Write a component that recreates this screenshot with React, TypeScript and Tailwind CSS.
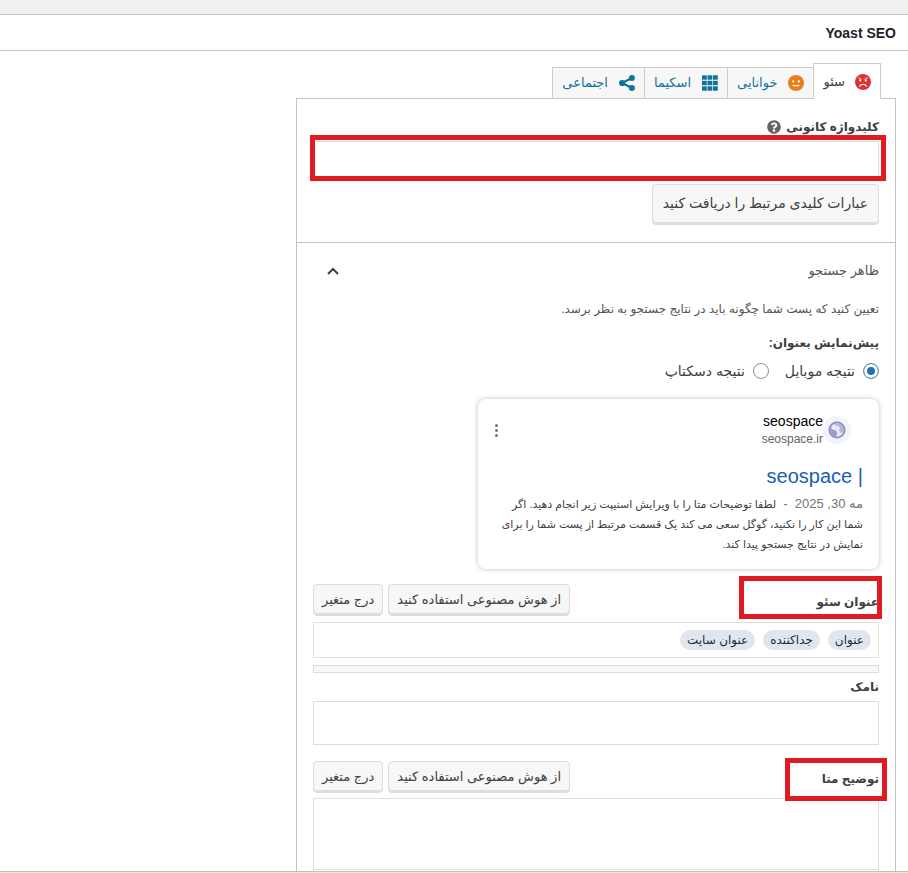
import { useState } from 'react'
import type { ReactNode } from 'react'

const FIELD = 'block w-full border border-[#ddd] bg-white outline-none'
const BUTTON =
  'rounded border border-[#dcdcdc] bg-[#f7f7f7] text-[#404040] shadow-[inset_0_-2px_0_rgba(0,0,0,0.1)] whitespace-nowrap'

function FaceIcon({ color, mood }: { color: string; mood: 'sad' | 'neutral' }) {
  return (
    <svg viewBox="0 0 16 16" className="h-4 w-4 shrink-0" aria-hidden="true">
      <circle cx="8" cy="8" r="8" fill={color} />
      <circle cx="5.2" cy="6.4" r="1.1" fill="#fff" />
      <circle cx="10.8" cy="6.4" r="1.1" fill="#fff" />
      {mood === 'sad' ? (
        <>
          <path d="M4.6 12.2c1.400-2.600 5.400-2.600 6.800 0" fill="none" stroke="#fff" strokeWidth="1.2" strokeLinecap="round" />
          <path d="M3.600 3.900l2.600 1.100M12.400 3.900 9.800 5" stroke="#fff" strokeWidth="0.8" strokeLinecap="round" />
        </>
      ) : (
        <path d="M5 10.6h6" stroke="#fff" strokeWidth="1.2" strokeLinecap="round" />
      )}
    </svg>
  )
}

function GridIcon() {
  return (
    <svg viewBox="0 0 16 16" className="h-4 w-4 shrink-0" fill="#0f7499" aria-hidden="true">
      {[0, 5.5, 11].map((y) =>
        [0, 5.5, 11].map((x) => <rect key={`${x}-${y}`} x={x} y={y + 0.3} width="4.8" height="4.4" />),
      )}
    </svg>
  )
}

function ShareIcon() {
  return (
    <svg viewBox="0 0 16 16" className="h-4 w-4 shrink-0" fill="#0f7499" aria-hidden="true">
      <path d="M13 3 3 8l10 5" fill="none" stroke="#0f7499" strokeWidth="2.2" />
      <circle cx="12.900" cy="3.100" r="3" />
      <circle cx="3.100" cy="8" r="3.100" />
      <circle cx="12.900" cy="12.900" r="3" />
    </svg>
  )
}

function HelpIcon() {
  return (
    <svg viewBox="0 0 512 512" className="h-[14px] w-[14px]" fill="#646464" aria-hidden="true">
      <path d="M504 256c0 137-111 248-248 248S8 393 8 256 119 8 256 8s248 111 248 248zM262.700 90c-54.500 0-89.300 23-116.500 63.800-3.500 5.300-2.400 12.400 2.700 16.300l34.700 26.300c5.200 3.900 12.600 3 16.700-2.100 17.900-22.700 30.100-35.800 57.300-35.800 20.400 0 45.700 13.100 45.700 33 0 15-12.400 22.700-32.500 34C247.100 238.500 216 255 216 296v4c0 6.600 5.400 12 12 12h56c6.600 0 12-5.400 12-12v-1.300c0-28.600 83.800-29.800 83.800-107.200C379.800 133.200 319.200 90 262.700 90zM256 338c-25.400 0-46 20.600-46 46s20.600 46 46 46 46-20.600 46-46-20.600-46-46-46z" />
    </svg>
  )
}

function Favicon() {
  return (
    <span className="flex h-7 w-7 items-center justify-center rounded-full bg-[#f3f3fa]">
      <svg viewBox="0 0 18 18" className="h-[18px] w-[18px]" aria-hidden="true">
        <circle cx="9" cy="9" r="7.600" fill="#e9e9f6" stroke="#8a8abf" strokeWidth="1.800" />
        <path d="M2.500 6.500 5.500 9l2.500.6 1.300 2.200-1 3.700C4.500 15.200 1.800 12 2.500 6.500z" fill="#9c9ccc" />
        <path d="M7.500 2.500 7 5l3-.4L12 7l-1 2.500 2.500 3C15.500 11 16 9.500 15.500 8.500 16 5 12.500 1.500 7.500 2.500z" fill="#b4b4dc" />
      </svg>
    </span>
  )
}

// Red frame drawn over a part of the form
function Mark({ className }: { className: string }) {
  return <span aria-hidden="true" className={`pointer-events-none absolute border-[5px] border-[#e11b22] ${className}`} />
}

const tabs: { id: string; label: string; icon: ReactNode }[] = [
  { id: 'seo', label: 'سئو', icon: <FaceIcon color="#dc3232" mood="sad" /> },
  { id: 'readability', label: 'خوانایی', icon: <FaceIcon color="#ee7c1b" mood="neutral" /> },
  { id: 'schema', label: 'اسکیما', icon: <GridIcon /> },
  { id: 'social', label: 'اجتماعی', icon: <ShareIcon /> },
]

function EditorHeader({ label, htmlFor, mark }: { label: string; htmlFor: string; mark: string }) {
  return (
    <div className="relative flex items-center justify-between">
      <label htmlFor={htmlFor} className="pt-1 text-xs font-bold text-[#404040]">
        {label}
      </label>
      <div className="flex gap-[5px]">
        <button type="button" className={`${BUTTON} h-8 px-2 text-[13px]`}>
          از هوش مصنوعی استفاده کنید
        </button>
        <button type="button" className={`${BUTTON} h-8 px-2 text-[13px]`}>
          درج متغیر
        </button>
      </div>
      <Mark className={mark} />
    </div>
  )
}

function SearchPreview() {
  return (
    <div className="mt-[18px] min-h-[170px] w-[401px] max-w-full rounded-lg bg-white px-4 pt-[13px] shadow-[0_0_5px_rgba(0,0,0,0.25)]">
      <div className="flex items-center justify-between">
        <div className="flex items-center pr-3">
          <Favicon />
          <div className="text-right">
            <div className="text-sm leading-[18px] text-black">seospace</div>
            <div className="text-xs leading-[18px] text-[#5f6368]">seospace.ir</div>
          </div>
        </div>
        <button type="button" aria-label="گزینه‌ها" className="flex w-1 flex-col items-center gap-[2px]">
          <span className="h-[3px] w-[3px] rounded-full bg-[#70757a]" />
          <span className="h-[3px] w-[3px] rounded-full bg-[#70757a]" />
          <span className="h-[3px] w-[3px] rounded-full bg-[#70757a]" />
        </button>
      </div>
      <div className="mt-[15px] text-xl leading-[26px] text-[#1a5fb4]">| seospace</div>
      <p className="mt-[5px] text-[11px] leading-5 text-[#3c4043]">
        <span className="text-[13px] leading-5 text-[#70757a]">مه 30, 2025 &nbsp;-&nbsp; </span>
        لطفا توضیحات متا را با ویرایش اسنیپت زیر انجام دهید. اگر شما این کار را نکنید، گوگل سعی می کند یک قسمت مرتبط از
        پست شما را برای نمایش در نتایج جستجو پیدا کند.
      </p>
    </div>
  )
}

export default function App() {
  const [active, setActive] = useState('seo')
  const [device, setDevice] = useState('mobile')

  return (
    <div
      dir="rtl"
      className="flex h-screen flex-col overflow-hidden bg-white font-['Liberation_Sans','DejaVu_Sans',sans-serif] text-[#404040]"
    >
      <div className="h-[15px] shrink-0 border-b border-[#c3c4c7] bg-[#f0f0f0]" />
      <header className="flex h-9 shrink-0 items-center border-b border-[#c3c4c7] px-3">
        <h2 className="text-sm font-bold text-[#1d2327]">Yoast SEO</h2>
      </header>

      <main className="min-h-0 flex-1 overflow-hidden px-3 pt-3">
        <div className="w-[600px] max-w-full">
          <div role="tablist" className="relative z-10 -mb-px flex items-end pr-[15px]">
            {tabs.map((tab) => (
              <button
                key={tab.id}
                type="button"
                role="tab"
                aria-selected={active === tab.id}
                onClick={() => setActive(tab.id)}
                className={
                  active === tab.id
                    ? 'flex h-9 items-center gap-[10px] border border-b-0 border-[#ccc] bg-white px-[9px] text-[13px] text-[#404040]'
                    : 'flex h-8 items-center gap-[11px] border border-r-0 border-[#ccc] bg-[#f7f7f7] px-[9px] text-[13px] text-[#0f7499]'
                }
              >
                {tab.icon}
                <span>{tab.label}</span>
              </button>
            ))}
          </div>

          <div className="border border-[#c3c4c7]">
            <section className="border-b border-[#c3c4c7] px-4 pt-4 pb-[17px]">
              <div className="flex h-6 items-center gap-[5px]">
                <label htmlFor="keyphrase" className="text-xs font-bold">
                  کلیدواژه کانونی
                </label>
                <button type="button" aria-label="راهنما">
                  <HelpIcon />
                </button>
              </div>
              <div className="relative mt-[2px]">
                <input id="keyphrase" type="text" className={`${FIELD} h-9`} />
                <Mark className="-top-[6px] -right-[7px] -bottom-1 -left-[3px]" />
              </div>
              <button type="button" className={`${BUTTON} mt-[7px] h-[41px] px-[10px] pb-1 text-sm`}>
                عبارات کلیدی مرتبط را دریافت کنید
              </button>
            </section>

            <section className="px-4">
              <button type="button" aria-expanded="true" className="flex h-14 w-full items-center justify-between pl-[14px]">
                <span className="text-[13px] text-[#555]">ظاهر جستجو</span>
                <svg viewBox="0 0 12 8" className="h-2 w-3" fill="none" stroke="#404040" strokeWidth="2" aria-hidden="true">
                  <path d="M1 7l5-5 5 5" />
                </svg>
              </button>
              <p className="text-xs leading-5 text-[#555]">تعیین کنید که پست شما چگونه باید در نتایج جستجو به نظر برسد.</p>

              <fieldset className="mt-[14px]">
                <legend className="text-xs leading-5 font-bold">پیش‌نمایش بعنوان:</legend>
                <div className="mt-2 flex h-5 items-center gap-4 text-sm">
                  {[
                    ['mobile', 'نتیجه موبایل'],
                    ['desktop', 'نتیجه دسکتاپ'],
                  ].map(([value, label]) => (
                    <label key={value} className="flex items-center gap-2">
                      <input
                        type="radio"
                        name="device"
                        checked={device === value}
                        onChange={() => setDevice(value)}
                        className="h-4 w-4 appearance-none rounded-full border border-[#8c8f94] bg-white checked:border-[#5b93bd] checked:bg-[#2271b1] checked:shadow-[inset_0_0_0_3px_#fff]"
                      />
                      {label}
                    </label>
                  ))}
                </div>
              </fieldset>

              <SearchPreview />

              <div className="mt-[15px]">
                <EditorHeader label="عنوان سئو" htmlFor="seo-title" mark="-top-2 -right-[3px] h-[43px] w-[143px]" />
                <div
                  id="seo-title"
                  role="textbox"
                  aria-label="عنوان سئو"
                  className={`${FIELD} mt-[6px] flex! h-9 items-center gap-2 px-[7px]`}
                >
                  {['عنوان', 'جداکننده', 'عنوان سایت'].map((tag) => (
                    <span key={tag} className="rounded-full bg-[#dfe6ef] px-[7px] text-xs leading-5 font-medium text-[#1e293b]">
                      {tag}
                    </span>
                  ))}
                </div>
                <div className="mt-[7px] h-2 border border-[#ddd] bg-[#f7f7f7]" />
              </div>

              <label htmlFor="slug" className="flex h-7 items-center text-xs font-bold">
                نامک
              </label>
              <input id="slug" type="text" className={`${FIELD} h-11`} />

              <div className="mt-4">
                <EditorHeader label="توضیح متا" htmlFor="meta-description" mark="-top-[3px] -right-2 h-[43px] w-[102px]" />
                <textarea id="meta-description" className={`${FIELD} mt-[5px] h-[72px] resize-none`} />
              </div>
              <div className="h-8" />
            </section>
          </div>
        </div>
      </main>
      <div className="h-[2px] shrink-0 border-t border-[#c9bf9f] bg-[#efe9d8]" />
    </div>
  )
}
